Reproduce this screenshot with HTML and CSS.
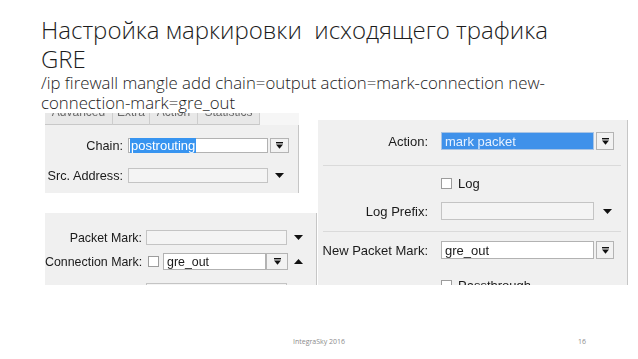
FILE: index.html
```html
<!DOCTYPE html>
<html lang="ru">
<head>
    <meta charset="UTF-8">
    <meta name="viewport" content="width=device-width, initial-scale=1.0">
    <title>Настройка маркировки исходящего трафика GRE</title>
    <link rel="stylesheet" href="styles.css">
</head>
<body>
<div class="slide">
    <header class="head">
        <h1 class="title">Настройка маркировки&nbsp; исходящего трафика<br>GRE</h1>
        <p class="cmd">/ip firewall mangle add chain=output action=mark-connection new-<br>connection-mark=gre_out</p>
    </header>

    <div class="shots">
        <div class="col-left">
            <!-- General tab: chain -->
            <div class="win win-general">
                <div class="tabs">
                    <div class="tab t-adv"><span>Advanced</span></div>
                    <div class="tab t-extra"><span>Extra</span></div>
                    <div class="tab t-action"><span>Action</span></div>
                    <div class="tab t-stat"><span>Statistics</span></div>
                    <div class="tab-rest"></div>
                </div>
                <div class="win-body">
                    <div class="row">
                        <label class="lbl">Chain:</label>
                        <div class="field"><span class="sel">postrouting</span></div>
                        <div class="btn">
                            <svg width="9" height="9" viewBox="0 0 9 9"><rect x="1" y="1" width="7" height="1.4" fill="#111"/><polygon points="1,3.6 8,3.6 4.5,7.8" fill="#111"/></svg>
                        </div>
                    </div>
                    <div class="row">
                        <label class="lbl">Src. Address:</label>
                        <div class="field off"></div>
                        <svg class="tri" width="9" height="5" viewBox="0 0 9 5"><polygon points="0,0 9,0 4.5,5" fill="#111"/></svg>
                    </div>
                </div>
            </div>

            <!-- Advanced tab: marks -->
            <div class="win win-marks">
                <div class="row">
                    <label class="lbl">Packet Mark:</label>
                    <div class="field off"></div>
                    <svg class="tri" width="9" height="5" viewBox="0 0 9 5"><polygon points="0,0 9,0 4.5,5" fill="#111"/></svg>
                </div>
                <div class="row tall">
                    <label class="lbl">Connection Mark:</label>
                    <div class="check"></div>
                    <div class="field short">gre_out</div>
                    <div class="btn wide">
                        <svg width="9" height="9" viewBox="0 0 9 9"><rect x="1" y="1" width="7" height="1.4" fill="#111"/><polygon points="1,3.6 8,3.6 4.5,7.8" fill="#111"/></svg>
                    </div>
                    <svg class="tri" width="9" height="5" viewBox="0 0 9 5"><polygon points="0,5 9,5 4.5,0" fill="#111"/></svg>
                </div>
                <div class="row">
                    <label class="lbl"></label>
                    <div class="field off"></div>
                </div>
            </div>
        </div>

        <!-- Action tab -->
        <div class="win win-action">
            <div class="row tall">
                <label class="lbl">Action:</label>
                <div class="field picked">mark packet</div>
                <div class="btn">
                    <svg width="9" height="9" viewBox="0 0 9 9"><rect x="1" y="1" width="7" height="1.4" fill="#111"/><polygon points="1,3.6 8,3.6 4.5,7.8" fill="#111"/></svg>
                </div>
            </div>
            <div class="sep sep-1"></div>
            <div class="row opt opt-log">
                <div class="check"></div>
                <span class="opt-text">Log</span>
            </div>
            <div class="row tall prefix">
                <label class="lbl">Log Prefix:</label>
                <div class="field off"></div>
                <svg class="tri" width="9" height="5" viewBox="0 0 9 5"><polygon points="0,0 9,0 4.5,5" fill="#111"/></svg>
            </div>
            <div class="sep sep-2"></div>
            <div class="row tall newmark">
                <label class="lbl">New Packet Mark:</label>
                <div class="field">gre_out</div>
                <div class="btn">
                    <svg width="9" height="9" viewBox="0 0 9 9"><rect x="1" y="1" width="7" height="1.4" fill="#111"/><polygon points="1,3.6 8,3.6 4.5,7.8" fill="#111"/></svg>
                </div>
            </div>
            <div class="row opt opt-pass">
                <div class="check"></div>
                <span class="opt-text">Passthrough</span>
            </div>
        </div>
    </div>

    <footer class="foot">
        <span>IntegraSky 2016</span>
        <span>16</span>
    </footer>
</div>
</body>
</html>
```

FILE: styles.css
```css
* {
    box-sizing: border-box;
}
body {
    margin: 0;
    background: #fff;
}
.slide {
    width: 638px;
    height: 359px;
    display: flex;
    flex-direction: column;
    overflow: hidden;
    background: #fff;
}
.head {
    padding: 15px 0 0 41px;
    color: #1c1c1c;
}
.title {
    margin: 0;
    font: 300 24px/29px "Open Sans", sans-serif;
}
.cmd {
    margin: 0;
    font: 300 16.8px/20px "Open Sans", sans-serif;
}

/* winbox screenshots */
.shots {
    display: flex;
    align-items: flex-start;
    gap: 1px;
    padding-left: 45px;
    font: 13px "Liberation Sans", Arial, sans-serif;
    color: #1a1a1a;
    filter: blur(0.35px);
}
.col-left {
    width: 272px;
    display: flex;
    flex-direction: column;
    gap: 20px;
}
.win {
    background: #f0f0f0;
    overflow: hidden;
}
.row {
    display: flex;
    align-items: center;
    height: 15px;
    flex-shrink: 0;
}
.row.tall {
    height: 18px;
}
.lbl {
    width: var(--lbl);
    text-align: right;
    white-space: nowrap;
    flex-shrink: 0;
}
.field {
    width: var(--field);
    height: 100%;
    margin-left: var(--gap);
    background: #fff;
    border: 1px solid #b2b2b2;
    padding-left: 3px;
    display: flex;
    align-items: center;
    white-space: nowrap;
}
.field.off {
    background: #f4f4f4;
    border-color: #c4c4c4;
}
.field.picked {
    background: #3f91ea;
    border-color: #a9c4e4;
    color: #e6f1ff;
}
.sel {
    background: #3794f0;
    color: #fff;
    padding: 0 1px;
    margin-left: -2px;
}
.btn {
    width: 19px;
    height: 100%;
    margin-left: 2px;
    background: #f2f2f2;
    border: 1px solid #b4b4b4;
    display: flex;
    align-items: center;
    justify-content: center;
    flex-shrink: 0;
}
.tri {
    margin-left: 7px;
    flex-shrink: 0;
}
.check {
    width: 11px;
    height: 11px;
    background: #fff;
    border: 1px solid #9c9c9c;
    flex-shrink: 0;
}

/* general tab */
.win-general {
    --lbl: 78px;
    --gap: 5px;
    --field: 140px;
    width: 254px;
    height: 80px;
    display: flex;
    flex-direction: column;
    background: transparent;
}
.tabs {
    height: 12px;
    display: flex;
}
.tab {
    height: 12px;
    overflow: hidden;
    background: #e8e8e8;
    border-right: 1px solid #cdcdcd;
    border-bottom: 1px solid #c8c8c8;
    color: #6a6a6a;
    font-size: 12px;
    text-align: center;
}
.tab span {
    display: block;
    margin-top: -8px;
    line-height: 14px;
}
.t-adv { width: 68px; }
.t-extra { width: 37px; }
.t-action { width: 48px; }
.t-stat { width: 62px; }
.tab-rest {
    flex: 1;
    background: #f6f6f6;
}
.win-body {
    flex: 1;
    background: #f0f0f0;
    border-right: 1px solid #c6c6c6;
    padding-top: 13px;
    display: flex;
    flex-direction: column;
    gap: 15px;
}
.win-body .lbl {
    font-size: 12.7px;
}

/* advanced tab */
.win-marks {
    --lbl: 97px;
    --gap: 4px;
    --field: 141px;
    width: 272px;
    height: 72px;
    border-right: 1px solid #c6c6c6;
    padding-top: 17px;
    display: flex;
    flex-direction: column;
    font-size: 12.4px;
}
.win-marks .row.tall {
    height: 17px;
    margin-top: 8px;
}
.win-marks .row:last-child {
    margin-top: 13px;
}
.win-marks .check {
    margin-left: 6px;
}
.win-marks .field.short {
    width: 103px;
    margin-left: 4px;
}
.btn.wide {
    width: 22px;
    margin-left: 0;
}
.win-marks .tall .tri {
    margin-left: 6px;
}

/* action tab */
.win-action {
    --lbl: 110px;
    --gap: 13px;
    --field: 153px;
    width: 310px;
    height: 165px;
    margin-top: 7px;
    border-right: 1px solid #c6c6c6;
    padding-top: 12px;
    display: flex;
    flex-direction: column;
}
.sep {
    height: 1px;
    margin: 0 6px 0 5px;
    background: #dadada;
    flex-shrink: 0;
}
.sep-1 {
    margin-top: 15px;
}
.sep-2 {
    margin-top: 11px;
}
.opt {
    padding-left: 123px;
    height: 11px;
}
.opt-text {
    margin-left: 6px;
}
.opt-log {
    margin-top: 12px;
}
.opt-pass {
    margin-top: 21px;
}
.prefix {
    height: 19px;
    margin-top: 13px;
}
.prefix .tri {
    margin-left: 9px;
}
.newmark {
    margin-top: 9px;
}
.win-action .btn {
    width: 18px;
}

.foot {
    margin-top: auto;
    display: flex;
    justify-content: space-between;
    padding: 0 52px 12px 293px;
    font: 7px/10px "Open Sans", sans-serif;
    color: #8c8c8c;
}
```
